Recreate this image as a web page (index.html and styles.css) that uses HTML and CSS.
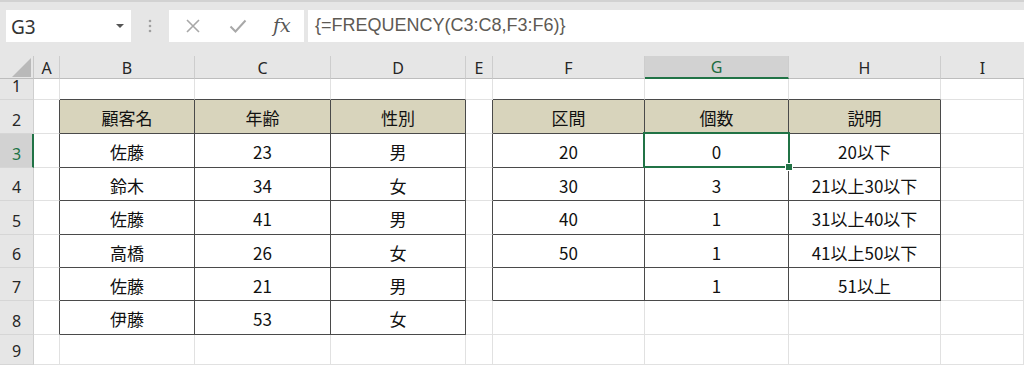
FILE: index.html
```html
<!DOCTYPE html>
<html lang="ja">
<head>
<meta charset="utf-8">
<title>FREQUENCY</title>
<link rel="stylesheet" href="styles.css">
</head>
<body>
<div class="app">
  <div class="topbar">
    <div class="namebox"><span class="ref">G3</span><span class="caret"></span></div>
    <div class="grip"><svg width="4" height="14" viewBox="0 0 4 14"><circle cx="2" cy="2" r="1.3"/><circle cx="2" cy="7" r="1.3"/><circle cx="2" cy="12" r="1.3"/></svg></div>
    <div class="fxbox">
      <svg class="ico" width="16" height="14" viewBox="0 0 16 14"><path d="M2 1 L14 13 M14 1 L2 13" stroke="#a8a8a8" stroke-width="1.6" fill="none"/></svg>
      <svg class="ico" width="18" height="14" viewBox="0 0 18 14"><path d="M1.5 7.5 L6.5 12.5 L16.5 1.5" stroke="#a8a8a8" stroke-width="2" fill="none"/></svg>
      <span class="fx">fx</span>
    </div>
    <div class="formula">{=FREQUENCY(C3:C8,F3:F6)}</div>
  </div>
  <div class="sheet">
    <!-- header row -->
    <div class="corner"><span class="tri"></span></div>
    <div class="ch">A</div><div class="ch">B</div><div class="ch">C</div><div class="ch">D</div><div class="ch">E</div><div class="ch">F</div><div class="ch chsel">G</div><div class="ch">H</div><div class="ch ch-last">I</div>
    <!-- row 1 -->
    <div class="rh">1</div>
    <div class="c"></div><div class="c ab"></div><div class="c ab"></div><div class="c ab"></div><div class="c"></div><div class="c ab"></div><div class="c ab"></div><div class="c ab"></div><div class="c"></div>
    <!-- row 2 -->
    <div class="rh">2</div>
    <div class="c lb"></div><div class="c th">顧客名</div><div class="c th">年齢</div><div class="c th">性別</div><div class="c lb"></div><div class="c th">区間</div><div class="c th">個数</div><div class="c th">説明</div><div class="c"></div>
    <!-- row 3 -->
    <div class="rh rhsel">3</div>
    <div class="c lb"></div><div class="c td">佐藤</div><div class="c td">23</div><div class="c td">男</div><div class="c lb"></div><div class="c td">20</div><div class="c td sel">0</div><div class="c td">20以下</div><div class="c"></div>
    <!-- row 4 -->
    <div class="rh">4</div>
    <div class="c lb"></div><div class="c td">鈴木</div><div class="c td">34</div><div class="c td">女</div><div class="c lb"></div><div class="c td">30</div><div class="c td">3</div><div class="c td">21以上30以下</div><div class="c"></div>
    <!-- row 5 -->
    <div class="rh">5</div>
    <div class="c lb"></div><div class="c td">佐藤</div><div class="c td">41</div><div class="c td">男</div><div class="c lb"></div><div class="c td">40</div><div class="c td">1</div><div class="c td">31以上40以下</div><div class="c"></div>
    <!-- row 6 -->
    <div class="rh">6</div>
    <div class="c lb"></div><div class="c td">高橋</div><div class="c td">26</div><div class="c td">女</div><div class="c lb"></div><div class="c td">50</div><div class="c td">1</div><div class="c td">41以上50以下</div><div class="c"></div>
    <!-- row 7 -->
    <div class="rh">7</div>
    <div class="c lb"></div><div class="c td">佐藤</div><div class="c td">21</div><div class="c td">男</div><div class="c lb"></div><div class="c td"></div><div class="c td">1</div><div class="c td">51以上</div><div class="c"></div>
    <!-- row 8 -->
    <div class="rh">8</div>
    <div class="c lb"></div><div class="c td">伊藤</div><div class="c td">53</div><div class="c td">女</div><div class="c"></div><div class="c"></div><div class="c"></div><div class="c"></div><div class="c"></div>
    <!-- row 9 -->
    <div class="rh">9</div>
    <div class="c"></div><div class="c"></div><div class="c"></div><div class="c"></div><div class="c"></div><div class="c"></div><div class="c"></div><div class="c"></div><div class="c"></div>
  </div>
</div>
</body>
</html>
```
FILE: styles.css
```css
* { box-sizing: border-box; }
html, body { margin: 0; padding: 0; }
body {
  width: 1024px;
  height: 365px;
  overflow: hidden;
  background: #ffffff;
  font-family: "Noto Sans", "Liberation Sans", sans-serif;
}
.app { display: flex; flex-direction: column; height: 365px; }

.topbar {
  height: 56px;
  background: #e6e6e6;
  border-top: 2px solid #d2d2d2;
  display: flex;
  align-items: flex-start;
  padding: 8px 0 0 6px;
}
.namebox {
  width: 125px;
  height: 32px;
  background: #ffffff;
  display: flex;
  align-items: center;
  justify-content: space-between;
  padding: 2px 7px 0 5px;
}
.ref {
  font-family: "Noto Sans", "Liberation Sans", sans-serif;
  font-size: 19px;
  color: #333333;
}
.caret {
  width: 0; height: 0;
  border-left: 4px solid transparent;
  border-right: 4px solid transparent;
  border-top: 4px solid #555555;
  margin-top: -3px;
}
.grip {
  width: 38px;
  height: 32px;
  display: flex;
  align-items: center;
  justify-content: center;
}
.grip svg { fill: #a0a0a0; }
.fxbox {
  width: 135px;
  height: 32px;
  background: #ffffff;
  display: flex;
  align-items: center;
  padding: 0 0 0 16px;
}
.fxbox .ico:nth-child(1) { margin-right: 28px; }
.fxbox .ico:nth-child(2) { margin-right: 26px; }
.fx {
  font-family: "DejaVu Serif", "Liberation Serif", serif;
  font-style: italic;
  font-size: 19px;
  color: #555555;
  margin-top: -2px;
}
.formula {
  flex: 1;
  height: 32px;
  margin-left: 4px;
  background: #ffffff;
  display: flex;
  align-items: center;
  padding: 0 0 1px 7px;
  font-family: "Liberation Sans", "Noto Sans", sans-serif;
  font-size: 18px;
  color: #5e5a54;
}

.sheet {
  flex: 1;
  display: grid;
  grid-template-columns: 34px 26px 135px 136px 135px 27px 152px 144px 152px 1fr;
  grid-template-rows: 23px 21px 34px 34px 33px 34px 33px 33px 34px 1fr;
  background: #ffffff;
}
.corner {
  background: #e6e6e6;
  border-right: 1px solid #c8c8c8;
  border-bottom: 1px solid #bdbdbd;
  position: relative;
}
.tri {
  position: absolute;
  right: 2px;
  bottom: 1px;
  width: 0; height: 0;
  border-left: 19px solid transparent;
  border-bottom: 19px solid #b9b9b9;
}
.ch {
  background: #e6e6e6;
  border-right: 1px solid #cdcdcd;
  border-bottom: 1px solid #bdbdbd;
  display: flex;
  align-items: center;
  justify-content: center;
  font-size: 16px;
  color: #262626;
  padding-top: 1px;
}
.ch-last { border-right: none; }
.chsel {
  background: #d2d2d2;
  border-bottom: 2px solid #217346;
  color: #1d6b3f;
}
.rh {
  background: #e6e6e6;
  border-right: 1px solid #cfcfcf;
  border-bottom: 1px solid #d6d6d6;
  display: flex;
  align-items: flex-end;
  justify-content: center;
  font-size: 16px;
  line-height: 1;
  color: #262626;
  padding-bottom: 5px;
}
.rhsel {
  background: #d2d2d2;
  border-right: 2px solid #217346;
  color: #217346;
  padding-left: 1px;
}
.c {
  border-right: 1px solid #e1e1e1;
  border-bottom: 1px solid #e1e1e1;
  display: flex;
  align-items: center;
  justify-content: center;
  font-family: "Noto Sans CJK JP", "Noto Sans", sans-serif;
  font-size: 17px;
  line-height: 1;
  color: #111111;
  padding-top: 2px;
}
.ab { border-bottom-color: #4a4a4a; }
.lb { border-right-color: #4a4a4a; }
.th {
  background: #d8d4bc;
  border-right-color: #4a4a4a;
  border-bottom-color: #4a4a4a;
}
.td {
  border-right-color: #4a4a4a;
  border-bottom-color: #4a4a4a;
}
.sel { position: relative; }
.sel::before {
  content: "";
  position: absolute;
  left: -2px; top: -2px; right: -2px; bottom: -1px;
  border: 2px solid #217346;
}
.sel::after {
  content: "";
  position: absolute;
  right: -5px;
  bottom: -4px;
  width: 6px;
  height: 6px;
  background: #217346;
  border: 1px solid #ffffff;
}
```
